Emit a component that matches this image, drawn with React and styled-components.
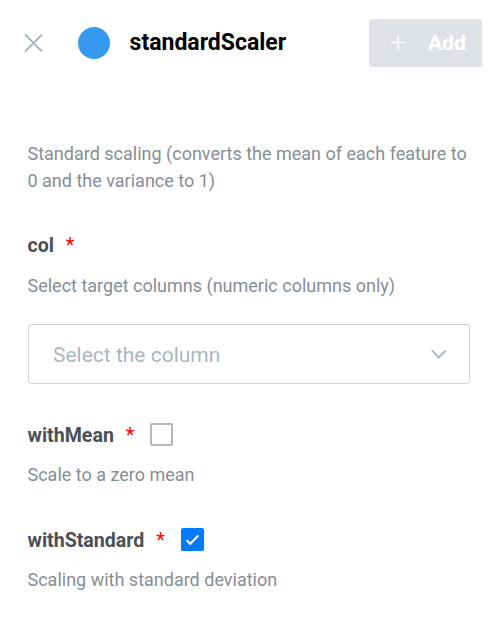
import React from "react";
import styled, { createGlobalStyle } from "styled-components";

const GlobalStyle = createGlobalStyle`
  * { box-sizing: border-box; }
  body { margin: 0; background: #fff; font-family: Roboto, sans-serif; }
`;
const Panel = styled.main`
  width: 504px;
  height: 617px;
  overflow: hidden;
  background: #fff;
`;
const Header = styled.header`
  display: flex;
  align-items: center;
  height: 48px;
  margin: 19px 22px 0 24px;
`;
const CloseButton = styled.button`
  display: flex;
  padding: 0;
  border: 0;
  background: none;
`;
const Dot = styled.span`
  width: 32px;
  height: 32px;
  margin-left: 33.6px;
  border-radius: 50%;
  background: #3699f0;
`;
const Title = styled.h1`
  flex: 1;
  margin: 0 0 0 20px;
  font-size: 23px;
  line-height: 28px;
  font-weight: 700;
  color: #000;
`;
const AddButton = styled.button`
  display: flex;
  align-items: center;
  gap: 22px;
  width: 113px;
  height: 48px;
  padding: 0 0 0 21px;
  border: 0;
  border-radius: 3px;
  background: #dee2e6;
  color: #fff;
  font: 700 21px Roboto, sans-serif;
`;
const Body = styled.section`
  display: flex;
  flex-direction: column;
  margin: 73px 34px 0 27.5px;
`;
const Text = styled.p`
  margin: 0 -10px 0 0;
  font-size: 18px;
  line-height: 27px;
  color: #868e96;
`;
const Label = styled.div`
  display: flex;
  align-items: center;
  height: 27px;
  margin-top: ${(p) => p.$top}px;
  margin-bottom: ${(p) => p.$bottom}px;
  font-size: 19.6px;
  font-weight: 700;
  color: #495057;
`;
const Name = styled.span`
  padding-top: 2px;
`;
const Required = styled.span`
  margin-left: 11.8px;
  font-size: 20px;
  font-weight: 400;
  color: #f00;
`;
const Select = styled.div`
  display: flex;
  align-items: center;
  justify-content: space-between;
  height: 60px;
  margin: 25px 0 0 0.5px;
  padding: 1px 22px 0 24px;
  border: 1px solid #ced4da;
  border-radius: 3px;
  font-size: 21px;
  color: #adb5bd;
`;
const Checkbox = styled.span`
  display: flex;
  align-items: center;
  justify-content: center;
  width: 23px;
  height: 23px;
  margin-left: 15.7px;
  border: 2px solid ${(p) => (p.$checked ? "#007bff" : "#adb8bf")};
  border-radius: 2px;
  background: ${(p) => (p.$checked ? "#007bff" : "#fff")};
`;

function Field({ name, checked, top, bottom, check }) {
  return (
    <Label $top={top} $bottom={bottom}>
      <Name>{name}</Name>
      <Required>*</Required>
      {check && (
        <Checkbox role="checkbox" aria-checked={!!checked} $checked={checked}>
          {checked && (
            <svg width="15" height="13" viewBox="0 0 15 13" fill="none" stroke="#fff" strokeWidth="2">
              <path d="M1.5 7 5.3 10.8 13.3 2.5" />
            </svg>
          )}
        </Checkbox>
      )}
    </Label>
  );
}

export default function App() {
  return (
    <Panel>
      <GlobalStyle />
      <Header>
        <CloseButton aria-label="Close">
          <svg width="20" height="20" viewBox="0 0 20 20" stroke="#a7b4bb" strokeWidth="2">
            <path d="M1 1.4 18.2 18.6M18.2 1.4 1 18.6" />
          </svg>
        </CloseButton>
        <Dot />
        <Title>standardScaler</Title>
        <AddButton>
          <svg width="16" height="16" viewBox="0 0 16 16" stroke="#fff" strokeWidth="1.5">
            <path d="M8 .8V14.8M1 7.6H15" />
          </svg>
          Add
        </AddButton>
      </Header>
      <Body>
        <Text>
          Standard scaling (converts the mean of each feature to 0 and the variance to 1)
        </Text>
        <Field name="col" top={37} bottom={14} />
        <Text>Select target columns (numeric columns only)</Text>
        <Select>
          Select the column
          <svg width="16" height="10" viewBox="0 0 16 10" fill="none" stroke="#a9b5bc" strokeWidth="1.8">
            <path d="M.8 .4 7.8 7.4 14.8 .4" />
          </svg>
        </Select>
        <Field name="withMean" check top={37} bottom={13} />
        <Text>Scale to a zero mean</Text>
        <Field name="withStandard" check checked top={38} bottom={13} />
        <Text>Scaling with standard deviation</Text>
      </Body>
    </Panel>
  );
}
